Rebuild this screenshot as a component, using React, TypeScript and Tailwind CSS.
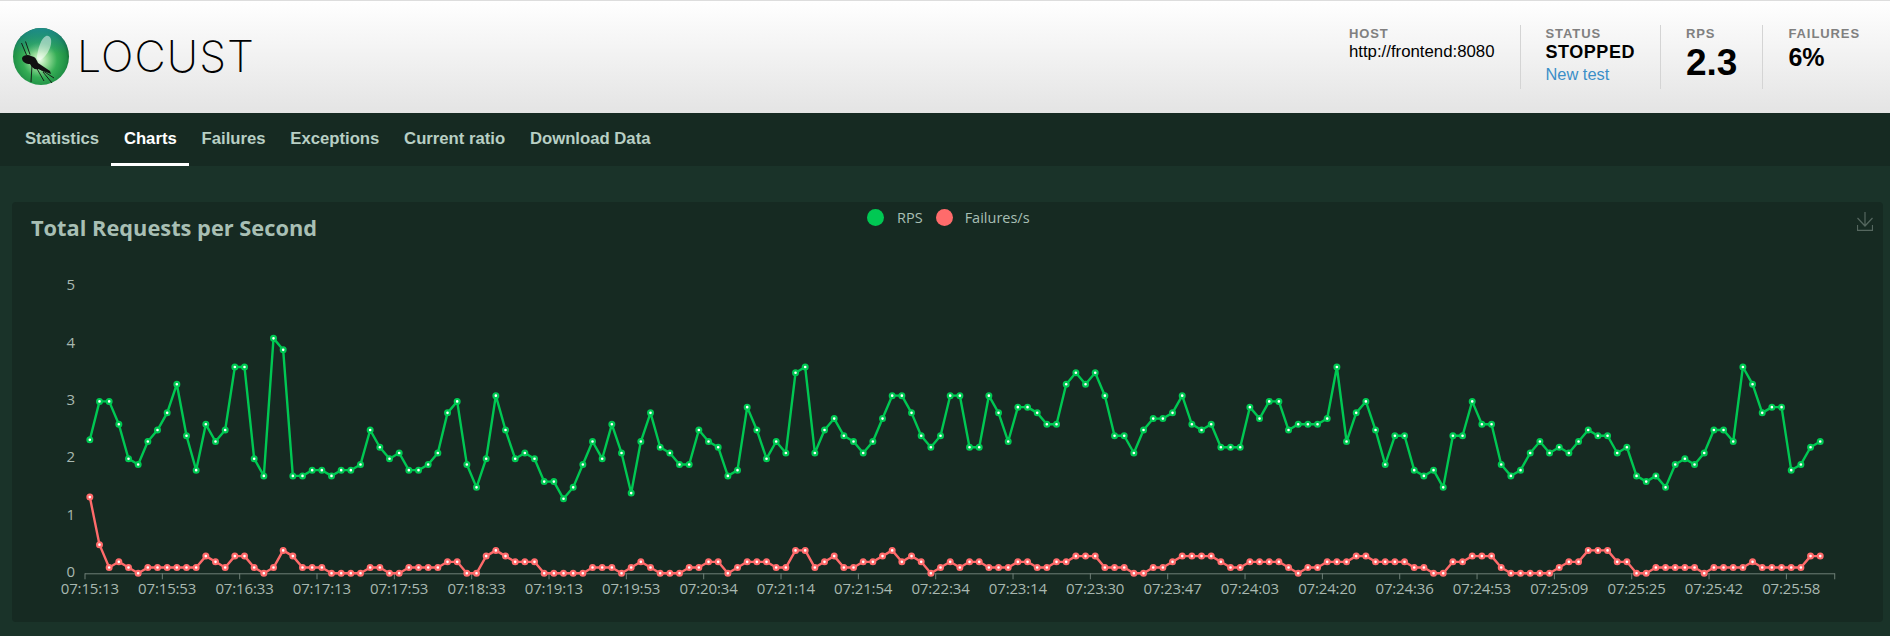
const green = [
  2.33, 3, 3, 2.6, 2, 1.9, 2.3, 2.5, 2.8, 3.3, 2.4, 1.8, 2.6, 2.3, 2.5, 3.6, 3.6, 2, 1.7, 4.1, 3.9, 1.7, 1.7, 1.8, 1.8, 1.7, 1.8, 1.8, 1.9, 2.5,
  2.2, 2, 2.1, 1.8, 1.8, 1.9, 2.1, 2.8, 3, 1.9, 1.5, 2, 3.1, 2.5, 2, 2.1, 2, 1.6, 1.6, 1.3, 1.5, 1.9, 2.3, 2, 2.6, 2.1, 1.4, 2.3,
  2.8, 2.2, 2.1, 1.9, 1.9, 2.5, 2.3, 2.2, 1.7, 1.8, 2.9, 2.5, 2, 2.3, 2.1, 3.5, 3.6, 2.1, 2.5, 2.7, 2.4, 2.3, 2.1, 2.3, 2.7, 3.1, 3.1, 2.8, 2.4, 2.2, 2.4, 3.1,
  3.1, 2.2, 2.2, 3.1, 2.8, 2.3, 2.9, 2.9, 2.8, 2.6, 2.6, 3.3, 3.5, 3.3, 3.5, 3.1, 2.4, 2.4, 2.1, 2.5, 2.7, 2.7, 2.8, 3.1, 2.6, 2.5, 2.6, 2.2, 2.2, 2.2, 2.9, 2.7, 3,
  3, 2.5, 2.6, 2.6, 2.6, 2.7, 3.6, 2.3, 2.8, 3, 2.5, 1.9, 2.4, 2.4, 1.8, 1.7, 1.8, 1.5, 2.4, 2.4, 3, 2.6, 2.6, 1.9, 1.7, 1.8, 2.1, 2.3, 2.1, 2.2, 2.1, 2.3, 2.5, 2.4, 2.4,
  2.1, 2.2, 1.7, 1.6, 1.7, 1.5, 1.9, 2, 1.9, 2.1, 2.5, 2.5, 2.3, 3.6, 3.3, 2.8, 2.9, 2.9, 1.8, 1.9, 2.2, 2.3,
];

const red = [
  1.33, 0.5, 0.1, 0.2, 0.1, 0, 0.1, 0.1, 0.1, 0.1, 0.1, 0.1, 0.3, 0.2, 0.1, 0.3, 0.3, 0.1, 0, 0.1, 0.4, 0.3, 0.1, 0.1, 0.1, 0, 0, 0, 0, 0.1,
  0.1, 0, 0, 0.1, 0.1, 0.1, 0.1, 0.2, 0.2, 0, 0, 0.3, 0.4, 0.3, 0.2, 0.2, 0.2, 0, 0, 0, 0, 0, 0.1, 0.1, 0.1, 0, 0.1, 0.2,
  0.1, 0, 0, 0, 0.1, 0.1, 0.2, 0.2, 0, 0.1, 0.2, 0.2, 0.2, 0.1, 0.1, 0.4, 0.4, 0.1, 0.2, 0.3, 0.1, 0.1, 0.2, 0.2, 0.3, 0.4, 0.2, 0.3, 0.2, 0, 0.1, 0.2,
  0.1, 0.2, 0.2, 0.1, 0.1, 0.1, 0.2, 0.2, 0.1, 0.1, 0.2, 0.2, 0.3, 0.3, 0.3, 0.1, 0.1, 0.1, 0, 0, 0.1, 0.1, 0.2, 0.3, 0.3, 0.3, 0.3, 0.2, 0.1, 0.1, 0.2, 0.2, 0.2,
  0.2, 0.1, 0, 0.1, 0.1, 0.2, 0.2, 0.2, 0.3, 0.3, 0.2, 0.2, 0.2, 0.2, 0.1, 0.1, 0, 0, 0.2, 0.2, 0.3, 0.3, 0.3, 0.1, 0, 0, 0, 0, 0, 0.1, 0.2, 0.2, 0.4, 0.4, 0.4,
  0.2, 0.2, 0, 0, 0.1, 0.1, 0.1, 0.1, 0.1, 0, 0.1, 0.1, 0.1, 0.1, 0.2, 0.1, 0.1, 0.1, 0.1, 0.1, 0.3, 0.3,
];

const times = [
  "07:15:13", "07:15:53", "07:16:33", "07:17:13", "07:17:53", "07:18:33", "07:19:13", "07:19:53",
  "07:20:34", "07:21:14", "07:21:54", "07:22:34", "07:23:14", "07:23:30", "07:23:47", "07:24:03",
  "07:24:20", "07:24:36", "07:24:53", "07:25:09", "07:25:25", "07:25:42", "07:25:58",
];

const chartLeft = 73;
const step = 9.667;
const baseY = 371.3;
const unit = 57.3;
const px = (i: number) => chartLeft + step * (i + 0.5);
const py = (v: number) => baseY - v * unit;

function Series({ data, color }: { data: number[]; color: string }) {
  return (
    <g>
      <polyline
        points={data.map((v, i) => `${px(i)},${py(v)}`).join(" ")}
        fill="none"
        stroke={color}
        strokeWidth={2.4}
        strokeLinejoin="bevel"
      />
      {data.map((v, i) => (
        <circle key={i} cx={px(i)} cy={py(v)} r={2.4} fill="#fff" stroke={color} strokeWidth={2.2} />
      ))}
    </g>
  );
}

function Logo() {
  return (
    <svg width="58" height="59" viewBox="0 0 58 59" className="shrink-0">
      <defs>
        <radialGradient id="orb" cx="48%" cy="56%" r="56%">
          <stop offset="0%" stopColor="#eafbe6" />
          <stop offset="22%" stopColor="#9fe09f" />
          <stop offset="55%" stopColor="#35ad55" />
          <stop offset="85%" stopColor="#1f8f45" />
          <stop offset="100%" stopColor="#0c5a2a" />
        </radialGradient>
        <linearGradient id="rim" x1="0" y1="0" x2="0" y2="1">
          <stop offset="0%" stopColor="#1f8f8c" />
          <stop offset="45%" stopColor="#1f8f8c" stopOpacity="0" />
        </linearGradient>
      </defs>
      <ellipse cx="29" cy="29.5" rx="28" ry="28.5" fill="url(#orb)" />
      <ellipse cx="29" cy="29.5" rx="28" ry="28.5" fill="url(#rim)" />
      <path d="M34 9c4-1 6 3 5 8-1 6-5 12-9 15-3 2-6 1-5-3 1-7 4-18 9-20z" fill="#fff" opacity="0.5" />
      <path d="M9.5 16l5 12M13.5 14.5l4.5 13" stroke="#111" strokeWidth="0.9" fill="none" />
      <path d="M10 31c1-3 6-4 9-2l3 1c2 1 3 4 4 6l12 8 1 3-13-5c-3 1-6-1-8-5-4 0-8-2-8-6z" fill="#111" />
      <path d="M20 38l-1 17M24 40l8 14M31 45l9 11M28 42l14 9" stroke="#111" strokeWidth="0.9" fill="none" />
    </svg>
  );
}

function Stat({ label, children, last }: { label: string; children: React.ReactNode; last?: boolean }) {
  return (
    <div className={`flex h-[64px] flex-col px-[25px] ${last ? "" : "border-r border-[#d4d4d4]"}`}>
      <div className="text-[13px] leading-[17px] font-bold tracking-[0.07em] text-[#808080] uppercase">{label}</div>
      {children}
    </div>
  );
}

export default function App() {
  return (
    <div className="h-[636px] overflow-hidden bg-[#1a3329] font-['Liberation_Sans',sans-serif]">
      <header className="flex h-[113px] items-start justify-between border-t border-[#dddddd] bg-gradient-to-b from-white to-[#e4e4e4]">
        <div className="mt-[26px] ml-[12px] flex items-center gap-[7px]">
          <Logo />
          <span className="font-['Inter',sans-serif] text-[43px] leading-none font-extralight tracking-[0.025em] text-black">LOCUST</span>
        </div>
        <div className="mt-[24px] flex pr-[5px] text-black">
          <Stat label="Host">
            <div className="text-[16.8px] leading-[19px]">http://frontend:8080</div>
          </Stat>
          <Stat label="Status">
            <div className="text-[18px] leading-[21px] font-bold tracking-[0.03em]">STOPPED</div>
            <div className="text-[16.4px] leading-[22px] text-[#3b8fc8]">New test</div>
          </Stat>
          <Stat label="RPS">
            <div className="text-[37px] leading-[42px] font-bold">2.3</div>
          </Stat>
          <Stat label="Failures" last>
            <div className="text-[25px] leading-[30px] font-bold">6%</div>
          </Stat>
        </div>
      </header>

      <nav className="flex h-[53px] bg-[#162a22] pl-[12.5px] text-[16.7px] font-bold text-[#b8cfc4]">
        {["Statistics", "Charts", "Failures", "Exceptions", "Current ratio", "Download Data"].map((tab) => (
          <div
            key={tab}
            className={`flex items-center border-b-[3px] px-[12.4px] pt-[1px] ${tab === "Charts" ? "border-white text-white" : "border-transparent"}`}
          >
            {tab}
          </div>
        ))}
      </nav>

      <main className="px-[12px] pt-[36px]">
        <section className="relative h-[420px] w-[1871px] rounded-[4px] bg-[#162a22]">
          <h2 className="absolute top-[10px] left-[19px] font-['Open_Sans',sans-serif] text-[21.8px] font-bold text-[#a8bfb4]">
            Total Requests per Second
          </h2>
          <div className="absolute top-[7px] left-[855px] flex items-center font-['Open_Sans',sans-serif] text-[14.5px] leading-[17px] text-[#a8bfb4]">
            <span className="h-[17px] w-[17px] rounded-full bg-[#00c853]" />
            <span className="mr-[13px] ml-[13px]">RPS</span>
            <span className="h-[17px] w-[17px] rounded-full bg-[#ff6b6b]" />
            <span className="ml-[12px]">Failures/s</span>
          </div>
          <svg className="absolute top-[10px] right-[10px] h-[19px] w-[16px]" viewBox="0 0 16 19" fill="none" stroke="#55675f" strokeWidth="1.2">
            <path d="M8 0v14M0.5 6l7.5 8 7.5-8M0.5 13v5.4h15V13" />
          </svg>
          <svg width="1871" height="420" className="absolute top-0 left-0">
            {[0, 1, 2, 3, 4, 5].map((v) => (
              <text key={v} x={63} y={py(v) + 3.5} textAnchor="end" fontSize="15" fill="#a8b8b0" fontFamily="Open Sans, sans-serif">
                {v}
              </text>
            ))}
            <line x1={chartLeft} x2={chartLeft + step * 181} y1={baseY + 0.5} y2={baseY + 0.5} stroke="#6e7f77" />
            {times.map((t, i) => (
              <g key={t}>
                <line x1={chartLeft + step * 8 * i} x2={chartLeft + step * 8 * i} y1={baseY} y2={baseY + 6} stroke="#6e7f77" />
                <text x={chartLeft + step * 8 * i + step / 2} y={baseY + 21} textAnchor="middle" fontSize="15" letterSpacing="-0.15" fill="#a8b8b0" fontFamily="Open Sans, sans-serif">
                  {t}
                </text>
              </g>
            ))}
            <line x1={chartLeft + step * 181} x2={chartLeft + step * 181} y1={baseY} y2={baseY + 6} stroke="#6e7f77" />
            <Series data={green} color="#00c853" />
            <Series data={red} color="#ff6b6b" />
          </svg>
        </section>
      </main>
    </div>
  );
}
